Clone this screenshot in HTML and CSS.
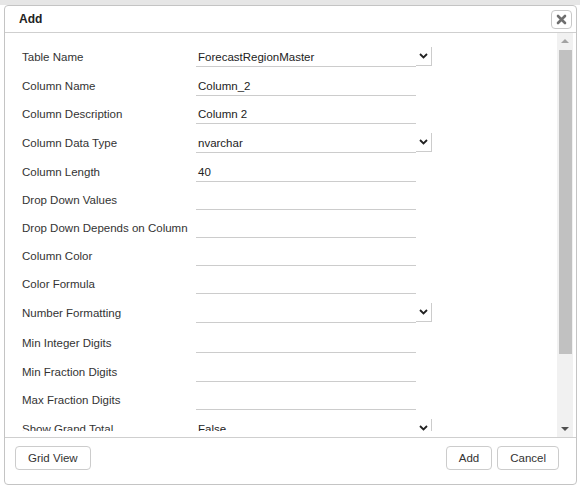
FILE: index.html
```html
<!DOCTYPE html>
<html>
<head>
<meta charset="utf-8">
<link rel="stylesheet" href="styles.css">
</head>
<body>
<div class="dialog">
  <div class="header">
    <span class="title">Add</span>
    <button class="close" aria-label="Close">
      <svg width="11" height="11" viewBox="0 0 11 11"><path d="M2 2 L9 9 M9 2 L2 9" stroke="#6f6f6f" stroke-width="2.6" stroke-linecap="round"/></svg>
    </button>
  </div>
  <div class="body">
    <div class="content">
      <div class="row tall"><label>Table Name</label><div class="field">ForecastRegionMaster</div><span class="arrow"><svg width="9" height="6" viewBox="0 0 9 6"><path d="M1 1 L4.5 4.5 L8 1" stroke="#222" stroke-width="1.8" fill="none"/></svg></span></div>
      <div class="row"><label>Column Name</label><div class="field">Column_2</div></div>
      <div class="row"><label>Column Description</label><div class="field">Column 2</div></div>
      <div class="row tall"><label>Column Data Type</label><div class="field">nvarchar</div><span class="arrow"><svg width="9" height="6" viewBox="0 0 9 6"><path d="M1 1 L4.5 4.5 L8 1" stroke="#222" stroke-width="1.8" fill="none"/></svg></span></div>
      <div class="row"><label>Column Length</label><div class="field">40</div></div>
      <div class="row"><label>Drop Down Values</label><div class="field"></div></div>
      <div class="row"><label>Drop Down Depends on Column</label><div class="field"></div></div>
      <div class="row"><label>Column Color</label><div class="field"></div></div>
      <div class="row"><label>Color Formula</label><div class="field"></div></div>
      <div class="row tall"><label>Number Formatting</label><div class="field"></div><span class="arrow"><svg width="9" height="6" viewBox="0 0 9 6"><path d="M1 1 L4.5 4.5 L8 1" stroke="#222" stroke-width="1.8" fill="none"/></svg></span></div>
      <div class="row tall"><label>Min Integer Digits</label><div class="field"></div></div>
      <div class="row"><label>Min Fraction Digits</label><div class="field"></div></div>
      <div class="row"><label>Max Fraction Digits</label><div class="field"></div></div>
      <div class="row tall"><label>Show Grand Total</label><div class="field">False</div><span class="arrow"><svg width="9" height="6" viewBox="0 0 9 6"><path d="M1 1 L4.5 4.5 L8 1" stroke="#222" stroke-width="1.8" fill="none"/></svg></span></div>
    </div>
    <div class="scrollbar">
      <div class="sb-btn"><span class="tri up"></span></div>
      <div class="sb-track"><div class="sb-thumb"></div></div>
      <div class="sb-btn"><span class="tri down"></span></div>
    </div>
  </div>
  <div class="footer">
    <button class="btn">Grid View</button>
    <div class="spacer"></div>
    <button class="btn">Add</button>
    <button class="btn">Cancel</button>
  </div>
</div>
</body>
</html>
```

FILE: styles.css
```css
html, body {
  margin: 0;
  padding: 0;
  background: #fff;
}
body {
  border-top: 5px solid #e6e6e6;
  font-family: "Liberation Sans", Arial, sans-serif;
  color: #333;
}
.dialog {
  margin-left: 4px;
  width: 573px;
  height: 480px;
  box-sizing: border-box;
  border: 1px solid #c4c4c4;
  border-radius: 4px;
  display: flex;
  flex-direction: column;
  background: #fff;
}
.header {
  height: 26px;
  border-bottom: 1px solid #cfcfcf;
  display: flex;
  align-items: center;
  padding: 0 4px 0 14px;
  flex: none;
}
.title {
  font-weight: bold;
  font-size: 12px;
  color: #222;
  flex: 1;
}
.close {
  width: 21px;
  height: 19px;
  border: 1px solid #c8c8c8;
  border-radius: 4px;
  background: #fff;
  padding: 0;
  display: flex;
  align-items: center;
  justify-content: center;
}
.body {
  flex: 1;
  display: flex;
  align-items: flex-start;
  min-height: 0;
  padding-right: 3px;
}
.content {
  flex: 1;
  height: 389px;
  overflow: hidden;
  padding: 9px 0 0 17px;
}
.row {
  display: grid;
  grid-template-columns: 174px 220px 16px;
  height: 28px;
  align-items: center;
  font-size: 11.5px;
}
.row.tall {
  height: 30px;
}
.row label {
  color: #333;
}
.field {
  height: 17px;
  border-bottom: 1px solid #cccccc;
  padding: 0 2px;
  line-height: 17px;
  margin-top: 2px;
  color: #222;
  white-space: nowrap;
}
.arrow {
  height: 19px;
  box-sizing: border-box;
  border-right: 1px solid #cccccc;
  border-bottom: 1px solid #cccccc;
  display: flex;
  align-items: center;
  justify-content: center;
  margin-top: -1px;
}
.scrollbar {
  width: 16px;
  height: 100%;
  background: #f1f1f1;
  display: flex;
  flex-direction: column;
  flex: none;
}
.sb-btn {
  height: 16px;
  display: flex;
  align-items: center;
  justify-content: center;
  flex: none;
}
.tri {
  width: 0;
  height: 0;
  border-left: 4px solid transparent;
  border-right: 4px solid transparent;
}
.tri.up {
  border-bottom: 4px solid #a3a3a3;
}
.tri.down {
  border-top: 4px solid #505050;
}
.sb-track {
  flex: 1;
  padding: 1px 1px 0 2px;
}
.sb-thumb {
  height: 304px;
  background: #c1c1c1;
}
.footer {
  height: 47px;
  box-sizing: border-box;
  border-top: 1px solid #cfcfcf;
  display: flex;
  align-items: flex-start;
  gap: 5px;
  padding: 8px 17px 0 10px;
  flex: none;
}
.spacer {
  flex: 1;
}
.btn {
  height: 24px;
  border: 1px solid #cccccc;
  border-radius: 4px;
  background: #fff;
  color: #333;
  font-family: "Liberation Sans", Arial, sans-serif;
  font-size: 11.5px;
  padding: 0 12px;
}
```
